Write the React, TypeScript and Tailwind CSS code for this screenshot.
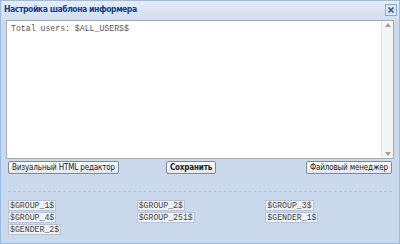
export default function App() {
  const tags = [
    '$GROUP_1$',
    '$GROUP_2$',
    '$GROUP_3$',
    '$GROUP_4$',
    '$GROUP_251$',
    '$GENDER_1$',
    '$GENDER_2$'
  ];

  const btn =
    'h-[13px] rounded-[2px] border border-[#7f8a99] bg-gradient-to-b from-white to-[#e3e7ed] px-[3px] text-[8px] tracking-[-0.15px] leading-none text-[#222]';

  return (
    <div className="h-[244px] w-[400px] overflow-hidden bg-[#cad9ec] font-['DejaVu_Sans_Condensed','Liberation_Sans',sans-serif]">
      <div className="flex h-full flex-col border border-[#99bbe8] bg-[#cad9ec]">
        <div className="flex h-[19px] items-center justify-between bg-gradient-to-b from-[#e4ecf7] to-[#d0def0] pb-[2px] pl-[3px] pr-[2px]">
          <span className="text-[8.6px] font-bold leading-none tracking-[-0.45px] text-[#15428b]">
            Настройка шаблона информера
          </span>
          <button
            type="button"
            className="flex h-[12px] w-[12px] items-center justify-center border border-[#8eaad6] bg-[#dbe6f5]"
          >
            <svg width="8" height="8" viewBox="0 0 8 8">
              <path d="M1.5 1.5 L6.5 6.5 M6.5 1.5 L1.5 6.5" stroke="#3c5a8a" strokeWidth="1.6" />
            </svg>
          </button>
        </div>

        <div className="flex flex-1 flex-col px-[5px]">
          <div className="flex h-[139px] border border-[#a5acb5] bg-white">
            <div className="flex-1 px-[4px] pt-[4px] font-['Liberation_Mono',monospace] text-[8.2px] leading-none text-[#555]">
              Total users: $ALL_USERS$
            </div>
            <div className="flex w-[12px] flex-col items-center justify-between border-l border-[#e3e3e3] bg-[#f5f5f5] py-[2px]">
              <svg width="6" height="4" viewBox="0 0 6 4">
                <path d="M0 4 L3 0 L6 4 Z" fill="#a0a0a0" />
              </svg>
              <svg width="6" height="4" viewBox="0 0 6 4">
                <path d="M0 0 L3 4 L6 0 Z" fill="#a0a0a0" />
              </svg>
            </div>
          </div>

          <div className="mt-[2px] flex items-center px-[2px]">
            <button type="button" className={btn}>
              Визуальный HTML редактор
            </button>
            <button type="button" className={btn + ' ml-[47px] font-bold text-[#111]'}>
              Сохранить
            </button>
            <button type="button" className={btn + ' ml-auto'}>
              Файловый менеджер
            </button>
          </div>

          <div className="mx-[2px] mt-[17px] border-t border-dashed border-[#b4c6df]" />

          <div className="mt-[8px] grid grid-cols-3 gap-y-[1px] pl-[2px]">
            {tags.map((tag) => (
              <div key={tag} className="flex h-[11px]">
                <span className="block h-[11px] border border-[#b5c3d6] bg-[#eef2f8] px-[1px] font-['Liberation_Mono',monospace] text-[8.2px] leading-[9px] text-[#444]">
                  {tag}
                </span>
              </div>
            ))}
          </div>
        </div>
      </div>
    </div>
  );
}
